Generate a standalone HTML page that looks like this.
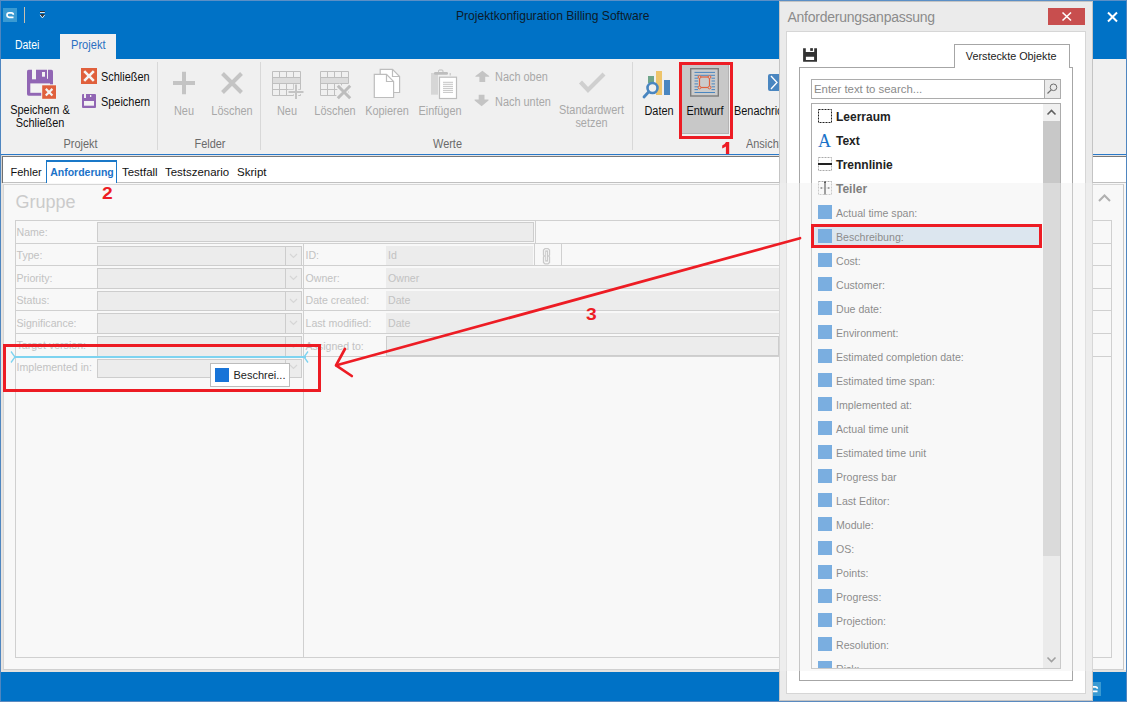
<!DOCTYPE html>
<html><head><meta charset="utf-8">
<style>
*{margin:0;padding:0;box-sizing:border-box}
html,body{width:1128px;height:702px;overflow:hidden;background:#fff;font-family:"Liberation Sans",sans-serif}
.a{position:absolute}
.t{position:absolute;white-space:nowrap;line-height:1}
#win{position:absolute;left:0;top:0;width:1127px;height:702px;background:#0072C6;border-left:1px solid #4f86c0;border-top:1px solid #5b8fc6;border-right:1px solid #4f86c0}
</style></head><body>
<div id="win"></div>
<!-- title bar -->
<div class="a" style="left:3px;top:8px;width:14px;height:14px;background:#3a9ad2"></div>
<div class="a" style="left:24px;top:7px;width:1px;height:16px;background:#c9bfae"></div>
<div class="t" style="left:455.6px;top:9.5px;font-size:12.6px;transform:scaleX(0.96);transform-origin:left;color:#0c1a2a">Projektkonfiguration Billing Software</div>
<div class="t" style="left:15px;top:39px;font-size:12px;transform:scaleX(0.87);transform-origin:left;color:#fff">Datei</div>
<div class="a" style="left:60px;top:34px;width:56px;height:26px;background:#f0f0f0"></div>
<div class="t" style="left:70.6px;top:39px;font-size:12px;transform:scaleX(0.925);transform-origin:left;color:#2a6fc2">Projekt</div>
<!-- ribbon -->
<div class="a" style="left:1px;top:59px;width:1125px;height:95px;background:#f0f0f0"></div>
<div class="a" style="left:1px;top:154px;width:1125px;height:1px;background:#2b79c8"></div>

<!-- RIBBON CONTENT -->
<svg class="a" style="left:22px;top:64px" width="40" height="40">
<rect x="5" y="5.7" width="26" height="26" rx="1.6" fill="#9166b4"/>
<rect x="10" y="5" width="4" height="10.3" fill="#f3f3f3"/>
<rect x="25" y="5" width="1" height="9.8" fill="#f3f3f3"/>
<rect x="20" y="8" width="3" height="4.7" fill="#f3f3f3"/>
<rect x="8.3" y="19.4" width="19.7" height="9.4" fill="#f3f3f3"/>
<rect x="19.2" y="20.3" width="15.5" height="15.2" fill="#f3f3f3"/>
<rect x="20.2" y="21.3" width="13.8" height="13.5" fill="#e0603c"/>
<path d="M23.8 24.9 L30.4 31.5 M30.4 24.9 L23.8 31.5" stroke="#f3f3f3" stroke-width="2.2"/>
</svg>
<svg class="a" style="left:78px;top:64px" width="24" height="48">
<rect x="3" y="4" width="16" height="16" fill="#e0603c"/>
<path d="M6.2 7.2 L15.8 16.8 M15.8 7.2 L6.2 16.8" stroke="#f5f5f5" stroke-width="2.6"/>
<rect x="4" y="30" width="14" height="14" rx="1" fill="#9166b4"/>
<rect x="6" y="30" width="2" height="4" fill="#f0f0f0"/>
<rect x="12" y="31" width="1.3" height="2" fill="#f0f0f0"/>
<rect x="6" y="37" width="10" height="4.7" fill="#f3f3f3"/>
</svg>
<div class="t" style="left:0px;top:103.7px;width:80px;text-align:center;font-size:12px;transform:scaleX(0.91);transform-origin:center;color:#111">Speichern &amp;</div>
<div class="t" style="left:0px;top:116.9px;width:80px;text-align:center;font-size:12px;transform:scaleX(0.91);transform-origin:center;color:#111">Schließen</div>
<div class="t" style="left:101px;top:70.8px;font-size:12px;transform:scaleX(0.91);transform-origin:left;color:#111">Schließen</div>
<div class="t" style="left:101px;top:95.6px;font-size:12px;transform:scaleX(0.91);transform-origin:left;color:#111">Speichern</div>
<div class="t" style="left:40px;top:137.7px;width:81px;text-align:center;font-size:12px;transform:scaleX(0.91);transform-origin:center;color:#6a6a6a">Projekt</div>
<div class="a" style="left:157px;top:62px;width:1px;height:88px;background:#d8d8d8"></div>
<!-- Felder -->
<svg class="a" style="left:170px;top:68px" width="80" height="30">
<path d="M14 3.8 V26.2 M3 15 H25" stroke="#c4c4c4" stroke-width="4"/>
<path d="M52.5 5.5 L71.5 24.5 M71.5 5.5 L52.5 24.5" stroke="#c4c4c4" stroke-width="4"/>
</svg>
<div class="t" style="left:164px;top:104.6px;width:40px;text-align:center;font-size:12px;transform:scaleX(0.91);transform-origin:center;color:#a8a8a8">Neu</div>
<div class="t" style="left:202px;top:104.6px;width:60px;text-align:center;font-size:12px;transform:scaleX(0.91);transform-origin:center;color:#a8a8a8">Löschen</div>
<div class="t" style="left:180px;top:137.7px;width:60px;text-align:center;font-size:12px;transform:scaleX(0.91);transform-origin:center;color:#6a6a6a">Felder</div>
<div class="a" style="left:260px;top:62px;width:1px;height:88px;background:#d8d8d8"></div>
<!-- Werte -->
<svg class="a" style="left:268px;top:64px" width="90" height="40" stroke="#bfbfbf" stroke-width="1" fill="none">
<g><rect x="4.5" y="13.5" width="28" height="6" fill="#dcdcdc"/><path d="M4.5 7.5 H32.5 V31.5 H4.5 Z M4.5 13.5 H32.5 M4.5 19.5 H32.5 M4.5 25.5 H32.5 M11.5 7.5 V13.5 M18.5 7.5 V13.5 M25.5 7.5 V13.5 M11.5 19.5 V31.5 M18.5 19.5 V31.5 M25.5 19.5 V31.5" fill="none"/></g>
<path d="M28 20 V35.5 M20 28 H36" stroke="#f0f0f0" stroke-width="4.5"/>
<path d="M28 20.5 V35 M20.5 28 H35.5" stroke="#c4c4c4" stroke-width="2"/>
<g transform="translate(48 0)"><rect x="4.5" y="13.5" width="28" height="6" fill="#dcdcdc"/><path d="M4.5 7.5 H32.5 V31.5 H4.5 Z M4.5 13.5 H32.5 M4.5 19.5 H32.5 M4.5 25.5 H32.5 M11.5 7.5 V13.5 M18.5 7.5 V13.5 M25.5 7.5 V13.5 M11.5 19.5 V31.5 M18.5 19.5 V31.5 M25.5 19.5 V31.5" fill="none"/></g>
<path d="M69.5 21.5 L82.5 34.5 M82.5 21.5 L69.5 34.5" stroke="#f0f0f0" stroke-width="6"/>
<path d="M69.8 21.8 L82.2 34.2 M82.2 21.8 L69.8 34.2" stroke="#bdbdbd" stroke-width="3"/>
</svg>
<div class="t" style="left:262px;top:104.6px;width:50px;text-align:center;font-size:12px;transform:scaleX(0.91);transform-origin:center;color:#a8a8a8">Neu</div>
<div class="t" style="left:305px;top:104.6px;width:60px;text-align:center;font-size:12px;transform:scaleX(0.91);transform-origin:center;color:#a8a8a8">Löschen</div>
<svg class="a" style="left:368px;top:64px" width="94" height="40" stroke="#bdbdbd" stroke-width="1.2">
<path d="M12.2 5.4 H24.5 L31.6 12.5 V28.5 H12.2 Z" fill="#fff"/>
<path d="M24.5 5.4 V12.5 H31.6" fill="none"/>
<path d="M6.3 10.3 H18.5 L25.6 17.5 V33.5 H6.3 Z" fill="#fff"/>
<path d="M18.5 10.3 V17.5 H25.6" fill="none"/>
<rect x="63" y="9" width="7" height="21.7" fill="#d6d6d6" stroke="none"/>
<rect x="66" y="8" width="14" height="2.7" rx="1.3" fill="#bdbdbd" stroke="none"/>
<rect x="70.5" y="6" width="4.5" height="2.5" rx="1" fill="none" stroke-width="1"/>
<rect x="81.5" y="9" width="1.5" height="2.5" fill="#cfcfcf" stroke="none"/>
<rect x="71.5" y="13.2" width="17" height="21.3" fill="#fff"/>
<path d="M75 18.3 H85 M75 20.3 H85 M75 22.4 H85 M75 24.4 H85 M75 26.4 H85 M75 28.4 H85" stroke-width="0.9"/>
</svg>
<div class="t" style="left:357px;top:104.6px;width:60px;text-align:center;font-size:12px;transform:scaleX(0.91);transform-origin:center;color:#a8a8a8">Kopieren</div>
<div class="t" style="left:410px;top:104.6px;width:60px;text-align:center;font-size:12px;transform:scaleX(0.91);transform-origin:center;color:#a8a8a8">Einfügen</div>
<svg class="a" style="left:472px;top:68px" width="20" height="42" fill="#c4c4c4">
<path d="M3.4 8 L10.4 2.8 L17.2 8 V8.8 H13.2 V13.9 H7.4 V8.8 H3.4 Z"/>
<path d="M2.6 32.4 L9.6 38.2 L16.5 32.4 V31.6 H12.5 V26.7 H6.7 V31.6 H2.6 Z"/>
</svg>
<div class="t" style="left:494.5px;top:70.9px;font-size:12px;transform:scaleX(0.91);transform-origin:left;color:#a8a8a8">Nach oben</div>
<div class="t" style="left:494.5px;top:95.6px;font-size:12px;transform:scaleX(0.91);transform-origin:left;color:#a8a8a8">Nach unten</div>
<svg class="a" style="left:575px;top:68px" width="36" height="30">
<path d="M5.5 14 L13 22 L29 6" stroke="#cfcfcf" stroke-width="4.2" fill="none"/>
</svg>
<div class="t" style="left:551px;top:103.9px;width:81px;text-align:center;font-size:12px;transform:scaleX(0.91);transform-origin:center;color:#a8a8a8">Standardwert</div>
<div class="t" style="left:551px;top:116.7px;width:81px;text-align:center;font-size:12px;transform:scaleX(0.91);transform-origin:center;color:#a8a8a8">setzen</div>
<div class="t" style="left:400px;top:137.7px;width:95px;text-align:center;font-size:12px;transform:scaleX(0.91);transform-origin:center;color:#6a6a6a">Werte</div>
<div class="a" style="left:632px;top:62px;width:1px;height:88px;background:#d8d8d8"></div>
<!-- Ansicht -->
<svg class="a" style="left:636px;top:62px" width="40" height="40">
<rect x="12" y="14" width="6" height="7" fill="#6fa58a"/>
<rect x="20" y="9" width="6" height="24" fill="#eec46a"/>
<rect x="28" y="18" width="6" height="15" fill="#4a86c0"/>
<circle cx="16.5" cy="26" r="5" fill="#f0f0f0" stroke="#4a86c0" stroke-width="2.6"/>
<path d="M12.8 29.8 L8 35" stroke="#4a86c0" stroke-width="2.8" stroke-linecap="round"/>
</svg>
<div class="t" style="left:629px;top:104.8px;width:60px;text-align:center;font-size:12px;transform:scaleX(0.91);transform-origin:center;color:#111">Daten</div>
<div class="a" style="left:682px;top:65px;width:47px;height:69px;background:#c8c8c8;border-right:1px solid #b4b4b4;border-bottom:1px solid #b4b4b4"></div>
<svg class="a" style="left:636px;top:62px" width="90" height="40">
<rect x="54.7" y="6.7" width="27.6" height="27.3" fill="#cbcbcb" stroke="#7c7c7c" stroke-width="1.4"/>
<path d="M58.5 10.4 H79 M58.5 30.5 H79 M58.5 13.3 H79" stroke="#4a86c0" stroke-width="1"/>
<path d="M58.5 16.2 H62 M58.5 19 H62 M58.5 21.9 H62 M58.5 24.8 H62 M58.5 27.6 H62 M75.5 16.2 H79 M75.5 19 H79 M75.5 21.9 H79 M75.5 24.8 H79 M75.5 27.6 H79" stroke="#4a86c0" stroke-width="1"/>
<rect x="63.5" y="15" width="10" height="10.5" fill="#cbcbcb" stroke="#e0603c" stroke-width="1.2"/>
<circle cx="63.5" cy="15" r="1.4" fill="#cbcbcb" stroke="#e0603c" stroke-width="1"/>
<circle cx="73.5" cy="15" r="1.4" fill="#cbcbcb" stroke="#e0603c" stroke-width="1"/>
<circle cx="63.5" cy="25.5" r="1.4" fill="#cbcbcb" stroke="#e0603c" stroke-width="1"/>
<circle cx="73.5" cy="25.5" r="1.4" fill="#cbcbcb" stroke="#e0603c" stroke-width="1"/>
</svg>
<div class="t" style="left:675px;top:104.8px;width:60px;text-align:center;font-size:12px;transform:scaleX(0.91);transform-origin:center;color:#111">Entwurf</div>
<div class="a" style="left:679px;top:62px;width:54px;height:77px;border:3px solid #ed1c24"></div>
<svg class="a" style="left:720px;top:140px" width="12" height="14"><path d="M6 2 H9.2 V14 H5.9 V6.6 Q4.4 7.9 2.2 8.4 V5.6 Q4.9 4.6 6 2 Z" fill="#ed1c24"/></svg>
<svg class="a" style="left:766px;top:72px" width="14" height="22">
<rect x="2" y="2" width="16" height="17" rx="2" fill="#4a86c0"/>
<path d="M5 4 L11 10.5 L5 17" stroke="#fff" stroke-width="1.3" fill="none"/>
</svg>
<div class="t" style="left:733.7px;top:104.8px;font-size:12px;transform:scaleX(0.91);transform-origin:left;color:#111">Benachrichtigung</div>
<div class="t" style="left:746px;top:137.7px;font-size:12px;transform:scaleX(0.91);transform-origin:left;color:#6a6a6a">Ansicht</div>
<!-- tab strip -->
<div class="a" style="left:1px;top:155px;width:1125px;height:1px;background:#e6e6e6"></div>
<div class="a" style="left:2px;top:156px;width:1124px;height:1px;background:#7a7a7a"></div>
<div class="a" style="left:1px;top:155px;width:1px;height:28px;background:#d2d2d2"></div>
<div class="a" style="left:2px;top:156px;width:1px;height:27px;background:#707070"></div>
<div class="a" style="left:3px;top:157px;width:1123px;height:25px;background:#fff"></div>
<div class="a" style="left:3px;top:182px;width:1123px;height:1px;background:#c0c0c0"></div>
<div class="a" style="left:46px;top:160px;width:71px;height:23px;background:#fff;border:1px solid #1a78c8;border-top:2px solid #1a78c8;border-bottom:none"></div>
<div class="t" style="left:10.5px;top:166.7px;font-size:11px;color:#111">Fehler</div>
<div class="t" style="left:50.2px;top:167.1px;font-size:10.5px;font-weight:bold;color:#1a72c8">Anforderung</div>
<div class="t" style="left:121.6px;top:166.7px;font-size:11px;transform:scaleX(1.04);transform-origin:left;color:#111">Testfall</div>
<div class="t" style="left:165px;top:166.7px;font-size:11px;transform:scaleX(1.04);transform-origin:left;color:#111">Testszenario</div>
<div class="t" style="left:237px;top:166.7px;font-size:11px;transform:scaleX(1.05);transform-origin:left;color:#111">Skript</div>
<!-- content -->
<div class="a" style="left:1px;top:183px;width:1125px;height:489px;background:#f8f8f8"></div>
<div class="a" style="left:1px;top:670px;width:1125px;height:2px;background:#e4e1de"></div>
<div class="a" style="left:1px;top:183px;width:2px;height:489px;background:#e6e3e0"></div>
<div class="a" style="left:3px;top:184px;width:1121px;height:486px;border:1px solid #d6d6d6;border-right-color:#c8c8c8;border-bottom-color:#d0d0d0"></div>
<div class="t" style="left:15.5px;top:192.5px;font-size:18px;color:#cbcbcb">Gruppe</div>

<div class="a" style="left:15px;top:220.0px;width:1097px;height:1px;background:#d0d0d0"></div>
<div class="a" style="left:15px;top:243.0px;width:1097px;height:1px;background:#d0d0d0"></div>
<div class="a" style="left:15px;top:265.0px;width:1097px;height:1px;background:#d0d0d0"></div>
<div class="a" style="left:15px;top:288.0px;width:1097px;height:1px;background:#d0d0d0"></div>
<div class="a" style="left:15px;top:310.0px;width:1097px;height:1px;background:#d0d0d0"></div>
<div class="a" style="left:15px;top:333.0px;width:1097px;height:1px;background:#d0d0d0"></div>
<div class="a" style="left:15px;top:356.0px;width:1097px;height:1px;background:#d0d0d0"></div>
<div class="a" style="left:15px;top:657.0px;width:1097px;height:1px;background:#d0d0d0"></div>
<div class="a" style="left:15.0px;top:220px;width:1px;height:438px;background:#d0d0d0"></div>
<div class="a" style="left:303.0px;top:243px;width:1px;height:415px;background:#d0d0d0"></div>
<div class="a" style="left:535.0px;top:220px;width:1px;height:23.5px;background:#d0d0d0"></div>
<div class="a" style="left:534.0px;top:243px;width:1px;height:23px;background:#d0d0d0"></div>
<div class="a" style="left:561.0px;top:243px;width:1px;height:23px;background:#d0d0d0"></div>
<div class="a" style="left:1111.0px;top:220px;width:1px;height:438px;background:#d0d0d0"></div>
<div class="a" style="left:97px;top:222px;width:437px;height:20px;background:#ececec;border:1px solid #cdcdcd"></div>
<div class="t" style="left:16.5px;top:226.7px;font-size:10.6px;color:#c2c2c2">Name:</div>
<div class="t" style="left:16.5px;top:250.3px;font-size:10.6px;color:#c2c2c2">Type:</div>
<div class="a" style="left:97px;top:246.0px;width:205px;height:20.0px;background:#ececec;border:1px solid #cdcdcd"></div>
<div class="a" style="left:285px;top:246.0px;width:1px;height:20.0px;background:#cdcdcd"></div>
<svg class="a" style="left:289px;top:253.0px" width="9" height="6"><path d="M1 1 L4.5 4.5 L8 1" stroke="#d6d6d6" stroke-width="1.2" fill="none"/></svg>
<div class="t" style="left:16.5px;top:272.8px;font-size:10.6px;color:#c2c2c2">Priority:</div>
<div class="a" style="left:97px;top:268.0px;width:205px;height:21.0px;background:#ececec;border:1px solid #cdcdcd"></div>
<div class="a" style="left:285px;top:268.0px;width:1px;height:21.0px;background:#cdcdcd"></div>
<svg class="a" style="left:289px;top:275.0px" width="9" height="6"><path d="M1 1 L4.5 4.5 L8 1" stroke="#d6d6d6" stroke-width="1.2" fill="none"/></svg>
<div class="t" style="left:16.5px;top:295.3px;font-size:10.6px;color:#c2c2c2">Status:</div>
<div class="a" style="left:97px;top:291.0px;width:205px;height:20.0px;background:#ececec;border:1px solid #cdcdcd"></div>
<div class="a" style="left:285px;top:291.0px;width:1px;height:20.0px;background:#cdcdcd"></div>
<svg class="a" style="left:289px;top:298.0px" width="9" height="6"><path d="M1 1 L4.5 4.5 L8 1" stroke="#d6d6d6" stroke-width="1.2" fill="none"/></svg>
<div class="t" style="left:16.5px;top:317.8px;font-size:10.6px;color:#c2c2c2">Significance:</div>
<div class="a" style="left:97px;top:313.0px;width:205px;height:21.0px;background:#ececec;border:1px solid #cdcdcd"></div>
<div class="a" style="left:285px;top:313.0px;width:1px;height:21.0px;background:#cdcdcd"></div>
<svg class="a" style="left:289px;top:320.0px" width="9" height="6"><path d="M1 1 L4.5 4.5 L8 1" stroke="#d6d6d6" stroke-width="1.2" fill="none"/></svg>
<div class="t" style="left:16.5px;top:339.8px;font-size:10.6px;color:#c2c2c2">Target version:</div>
<div class="a" style="left:97px;top:336.0px;width:205px;height:21.0px;background:#ececec;border:1px solid #cdcdcd"></div>
<div class="a" style="left:285px;top:336.0px;width:1px;height:21.0px;background:#cdcdcd"></div>
<svg class="a" style="left:289px;top:343.0px" width="9" height="6"><path d="M1 1 L4.5 4.5 L8 1" stroke="#d6d6d6" stroke-width="1.2" fill="none"/></svg>
<div class="t" style="left:16.5px;top:362.4px;font-size:10.6px;color:#c2c2c2">Implemented in:</div>
<div class="a" style="left:97px;top:358.5px;width:205px;height:19px;background:#ececec;border:1px solid #cdcdcd"></div>
<div class="a" style="left:285px;top:358.5px;width:1px;height:19px;background:#cdcdcd"></div>
<svg class="a" style="left:289px;top:364px" width="9" height="6"><path d="M1 1 L4.5 4.5 L8 1" stroke="#d6d6d6" stroke-width="1.2" fill="none"/></svg>
<div class="t" style="left:305.5px;top:250.3px;font-size:10.6px;color:#c2c2c2">ID:</div>
<div class="a" style="left:386px;top:246.0px;width:147px;height:18.5px;background:#ececec;"></div>
<div class="t" style="left:388px;top:250.3px;font-size:10.6px;color:#c2c2c2">Id</div>
<div class="t" style="left:305.5px;top:272.8px;font-size:10.6px;color:#c2c2c2">Owner:</div>
<div class="a" style="left:386px;top:268.0px;width:393px;height:19.5px;background:#ececec;"></div>
<div class="t" style="left:388px;top:272.8px;font-size:10.6px;color:#c2c2c2">Owner</div>
<div class="t" style="left:305.5px;top:295.3px;font-size:10.6px;color:#c2c2c2">Date created:</div>
<div class="a" style="left:386px;top:291.0px;width:393px;height:18.5px;background:#ececec;"></div>
<div class="t" style="left:388px;top:295.3px;font-size:10.6px;color:#c2c2c2">Date</div>
<div class="t" style="left:305.5px;top:317.8px;font-size:10.6px;color:#c2c2c2">Last modified:</div>
<div class="a" style="left:386px;top:313.0px;width:393px;height:19.5px;background:#ececec;"></div>
<div class="t" style="left:388px;top:317.8px;font-size:10.6px;color:#c2c2c2">Date</div>
<div class="t" style="left:305.5px;top:340.8px;font-size:10.6px;color:#c2c2c2">Assigned to:</div>
<div class="a" style="left:386px;top:336.0px;width:393px;height:19.5px;background:#ececec;border:1px solid #cdcdcd;"></div>
<svg class="a" style="left:536px;top:244px" width="22" height="24" fill="none" stroke="#cacaca"><path d="M9 4.6 H12 L13.5 6.1 V11 L12.7 12 L13.5 13 V18.4 L12 19.9 H9 L7.5 18.4 V13 L8.3 12 L7.5 11 V6.1 Z" stroke-width="1.3"/><rect x="9.7" y="6.9" width="1.8" height="10.2" stroke-width="1"/></svg>
<svg class="a" style="left:1097px;top:193px" width="16" height="10"><path d="M2 8 L7.5 2.5 L13 8" stroke="#b0b0b0" stroke-width="2" fill="none"/></svg>
<!-- status bar -->
<div class="a" style="left:1px;top:672px;width:1125px;height:29px;background:#0072C6"></div>
<!-- dialog -->
<div class="a" style="left:779px;top:1px;width:314px;height:700px;background:#ebebeb;border:1px solid #c4c4c4"></div>
<div class="t" style="left:787.5px;top:10.3px;font-size:14px;letter-spacing:-0.25px;color:#8c8c8c">Anforderungsanpassung</div>
<div class="a" style="left:1048px;top:8px;width:37px;height:17px;background:#c84e4e"></div>
<svg class="a" style="left:1061px;top:11px" width="12" height="11"><path d="M1.5 1.5 L10 9.5 M10 1.5 L1.5 9.5" stroke="#fff" stroke-width="1.6"/></svg>
<div class="a" style="left:786px;top:31px;width:300px;height:663px;background:#fff;border:1px solid #d6d6d6"></div>
<svg class="a" style="left:798px;top:42px" width="24" height="24"><path fill="#333" d="M5.1 6.15 H7.8 V10.1 H16.2 V6.15 H19 V19.8 H5.1 Z M7.9 14.8 V17.9 H16.1 V14.8 Z" fill-rule="evenodd"/><rect x="12.2" y="6.15" width="2.7" height="2.75" fill="#333"/></svg>
<div class="a" style="left:799px;top:66.5px;width:274px;height:614px;border:1px solid #a6a6a6"></div>
<div class="a" style="left:954px;top:44px;width:116px;height:24px;background:#fff;border:1px solid #a6a6a6;border-bottom:none"></div>
<div class="t" style="left:965.8px;top:50.7px;font-size:10.8px;color:#222">Versteckte Objekte</div>
<div class="a" style="left:811px;top:79px;width:250px;height:20px;background:#fff;border:1px solid #acacac"></div>
<div class="a" style="left:1044px;top:80px;width:16px;height:18px;background:#eaeaea;border-left:1px solid #acacac"></div>
<svg class="a" style="left:1044px;top:80px" width="16" height="18"><circle cx="9.5" cy="7.3" r="3.3" fill="none" stroke="#6e6e6e" stroke-width="1"/><path d="M7.2 9.8 L3.5 13.5" stroke="#6e6e6e" stroke-width="1.2"/></svg>
<div class="t" style="left:814px;top:83.5px;font-size:11.4px;color:#8a8a8a">Enter text to search...</div>
<div class="a" style="left:811px;top:103px;width:250px;height:566px;background:#fff;border:1px solid #acacac;overflow:hidden">
<div class="a" style="left:231px;top:0px;width:17px;height:564px;background:#e8e8e8"></div>
<div class="a" style="left:231px;top:0px;width:17px;height:17px;background:#f0f0f0"></div>
<svg class="a" style="left:231px;top:0px" width="17" height="17"><path d="M4.5 10.5 L8.5 6.5 L12.5 10.5" stroke="#606060" stroke-width="1.6" fill="none"/></svg>
<div class="a" style="left:231px;top:17px;width:17px;height:435px;background:#c8c8c8"></div>
<svg class="a" style="left:231px;top:547px" width="17" height="17"><path d="M4.5 6.5 L8.5 10.5 L12.5 6.5" stroke="#606060" stroke-width="1.6" fill="none"/></svg>

<svg class="a" style="left:6px;top:5.3px" width="14" height="14"><rect x="0.5" y="0.5" width="13" height="13" fill="none" stroke="#222" stroke-width="1" stroke-dasharray="2 1"/></svg>
<div class="t" style="left:24px;top:6.8px;font-size:12px;font-weight:bold;color:#222">Leerraum</div>
<div class="t" style="left:6px;top:27.5px;font-family:'Liberation Serif',serif;font-size:18px;color:#1a72c8">A</div>
<div class="t" style="left:24px;top:30.8px;font-size:12px;font-weight:bold;color:#222">Text</div>
<svg class="a" style="left:6px;top:53.3px" width="14" height="14"><rect x="0.5" y="0.5" width="13" height="13" fill="none" stroke="#aaa" stroke-width="1" stroke-dasharray="2 1"/></svg>
<div class="a" style="left:6px;top:59.3px;width:14px;height:2px;background:#222"></div>
<div class="t" style="left:24px;top:54.8px;font-size:12px;font-weight:bold;color:#222">Trennlinie</div>
<svg class="a" style="left:6px;top:77.3px" width="14" height="14"><rect x="0.5" y="0.5" width="13" height="13" fill="none" stroke="#aaa" stroke-width="1" stroke-dasharray="2 1"/></svg>
<svg class="a" style="left:6px;top:77.3px" width="14" height="14"><rect x="6.2" y="0.5" width="1.6" height="13" fill="#333"/><circle cx="3.3" cy="7" r="1" fill="#555"/><circle cx="10.7" cy="7" r="1" fill="#555"/><path d="M4.3 7 H5.5 M8.5 7 H9.7" stroke="#888" stroke-width="0.8"/></svg>
<div class="t" style="left:24px;top:78.8px;font-size:12px;font-weight:bold;color:#222">Teiler</div>
<div class="a" style="left:6px;top:101.3px;width:14px;height:14px;background:#1b78d3"></div>
<div class="t" style="left:24px;top:104.0px;font-size:10.6px;color:#373737">Actual time span:</div>
<div class="a" style="left:0px;top:123px;width:228px;height:18px;background:#cddeee"></div>
<div class="a" style="left:6px;top:125.3px;width:14px;height:14px;background:#1b78d3"></div>
<div class="t" style="left:24px;top:128.0px;font-size:10.6px;color:#373737">Beschreibung:</div>
<div class="a" style="left:6px;top:149.3px;width:14px;height:14px;background:#1b78d3"></div>
<div class="t" style="left:24px;top:152.0px;font-size:10.6px;color:#373737">Cost:</div>
<div class="a" style="left:6px;top:173.3px;width:14px;height:14px;background:#1b78d3"></div>
<div class="t" style="left:24px;top:176.0px;font-size:10.6px;color:#373737">Customer:</div>
<div class="a" style="left:6px;top:197.3px;width:14px;height:14px;background:#1b78d3"></div>
<div class="t" style="left:24px;top:200.0px;font-size:10.6px;color:#373737">Due date:</div>
<div class="a" style="left:6px;top:221.3px;width:14px;height:14px;background:#1b78d3"></div>
<div class="t" style="left:24px;top:224.0px;font-size:10.6px;color:#373737">Environment:</div>
<div class="a" style="left:6px;top:245.3px;width:14px;height:14px;background:#1b78d3"></div>
<div class="t" style="left:24px;top:248.0px;font-size:10.6px;color:#373737">Estimated completion date:</div>
<div class="a" style="left:6px;top:269.3px;width:14px;height:14px;background:#1b78d3"></div>
<div class="t" style="left:24px;top:272.0px;font-size:10.6px;color:#373737">Estimated time span:</div>
<div class="a" style="left:6px;top:293.3px;width:14px;height:14px;background:#1b78d3"></div>
<div class="t" style="left:24px;top:296.0px;font-size:10.6px;color:#373737">Implemented at:</div>
<div class="a" style="left:6px;top:317.3px;width:14px;height:14px;background:#1b78d3"></div>
<div class="t" style="left:24px;top:320.0px;font-size:10.6px;color:#373737">Actual time unit</div>
<div class="a" style="left:6px;top:341.3px;width:14px;height:14px;background:#1b78d3"></div>
<div class="t" style="left:24px;top:344.0px;font-size:10.6px;color:#373737">Estimated time unit</div>
<div class="a" style="left:6px;top:365.3px;width:14px;height:14px;background:#1b78d3"></div>
<div class="t" style="left:24px;top:368.0px;font-size:10.6px;color:#373737">Progress bar</div>
<div class="a" style="left:6px;top:389.3px;width:14px;height:14px;background:#1b78d3"></div>
<div class="t" style="left:24px;top:392.0px;font-size:10.6px;color:#373737">Last Editor:</div>
<div class="a" style="left:6px;top:413.3px;width:14px;height:14px;background:#1b78d3"></div>
<div class="t" style="left:24px;top:416.0px;font-size:10.6px;color:#373737">Module:</div>
<div class="a" style="left:6px;top:437.3px;width:14px;height:14px;background:#1b78d3"></div>
<div class="t" style="left:24px;top:440.0px;font-size:10.6px;color:#373737">OS:</div>
<div class="a" style="left:6px;top:461.3px;width:14px;height:14px;background:#1b78d3"></div>
<div class="t" style="left:24px;top:464.0px;font-size:10.6px;color:#373737">Points:</div>
<div class="a" style="left:6px;top:485.3px;width:14px;height:14px;background:#1b78d3"></div>
<div class="t" style="left:24px;top:488.0px;font-size:10.6px;color:#373737">Progress:</div>
<div class="a" style="left:6px;top:509.3px;width:14px;height:14px;background:#1b78d3"></div>
<div class="t" style="left:24px;top:512.0px;font-size:10.6px;color:#373737">Projection:</div>
<div class="a" style="left:6px;top:533.3px;width:14px;height:14px;background:#1b78d3"></div>
<div class="t" style="left:24px;top:536.0px;font-size:10.6px;color:#373737">Resolution:</div>
<div class="a" style="left:6px;top:557.3px;width:14px;height:14px;background:#1b78d3"></div>
<div class="t" style="left:24px;top:560.0px;font-size:10.6px;color:#373737">Risk:</div>
</div>
<div class="a" style="left:779px;top:183px;width:314px;height:488px;background:rgba(240,240,240,0.45)"></div>


<!-- title bar extras -->
<svg class="a" style="left:3px;top:8px" width="14" height="14"><rect width="14" height="14" fill="#3a9ad2"/><path d="M10.3 6.8 Q10.3 4.8 8.4 4.8 H6.2 Q4 4.8 4 6.9 V7.1 Q4 9.3 6.2 9.3 H10.5" stroke="#fff" stroke-width="1.7" fill="none"/></svg>
<svg class="a" style="left:39px;top:10px" width="8" height="10"><rect x="1" y="1" width="4.8" height="1" fill="#333"/><rect x="1" y="2" width="4.8" height="0.9" fill="#f4f4f4"/><path d="M1 4.1 H5.8 L3.4 7.2 Z" fill="#333"/><path d="M1 4.9 L3.4 7.9 L5.8 4.9" stroke="#f4f4f4" stroke-width="0.9" fill="none"/></svg>
<svg class="a" style="left:1106px;top:11px" width="13" height="12"><path d="M2 1.5 L11 10.5 M11 1.5 L2 10.5" stroke="#fff" stroke-width="2"/></svg>
<!-- status bar icon -->
<div class="a" style="left:1093px;top:682px;width:8px;height:14px;background:#3a9ad2"></div>
<svg class="a" style="left:1093px;top:682px" width="8" height="14"><g transform="translate(-6 0)"><path d="M10.3 6.8 Q10.3 4.8 8.4 4.8 H6.2 Q4 4.8 4 6.9 V7.1 Q4 9.3 6.2 9.3 H10.5" stroke="#fff" stroke-width="1.7" fill="none"/></g></svg>
<!-- annotations -->
<div class="t" style="left:101.5px;top:185.5px;font-size:16px;font-weight:bold;transform:scaleX(1.2);transform-origin:left;color:#ed1c24">2</div>
<div class="t" style="left:586.2px;top:307px;font-size:16px;font-weight:bold;transform:scaleX(1.2);transform-origin:left;color:#ed1c24">3</div>
<div class="a" style="left:811px;top:224px;width:231px;height:24px;border:3px solid #ed1c24"></div>
<div class="a" style="left:3px;top:344px;width:318px;height:48px;border:3px solid #ed1c24"></div>
<div class="a" style="left:14px;top:356px;width:292px;height:2px;background:#7dd3f0"></div>
<svg class="a" style="left:8px;top:349px" width="304" height="16" fill="none" stroke="#7dd3f0" stroke-width="1.3"><path d="M3 2.5 L7 8 L3 13.5"/><path d="M300 2.5 L296 8 L300 13.5"/></svg>
<div class="a" style="left:210px;top:363px;width:80px;height:24px;background:#fff;border:1px solid #bcbcbc"></div>
<div class="a" style="left:215px;top:368px;width:14px;height:14px;background:#1874d8"></div>
<div class="t" style="left:233.5px;top:369.8px;font-size:11px;color:#222">Beschrei...</div>
<svg class="a" style="left:0;top:0;pointer-events:none" width="1128" height="702"><g stroke="#ed1c24" stroke-width="2.7" fill="none" stroke-linecap="round" stroke-linejoin="round"><path d="M800 238.2 L336.5 365.3"/><path d="M344.9 349 L336 365.4 L351.8 376"/></g></svg>
<div class="a" style="left:0;top:701px;width:1127px;height:1px;background:#5a8ac0"></div>
</body></html>
